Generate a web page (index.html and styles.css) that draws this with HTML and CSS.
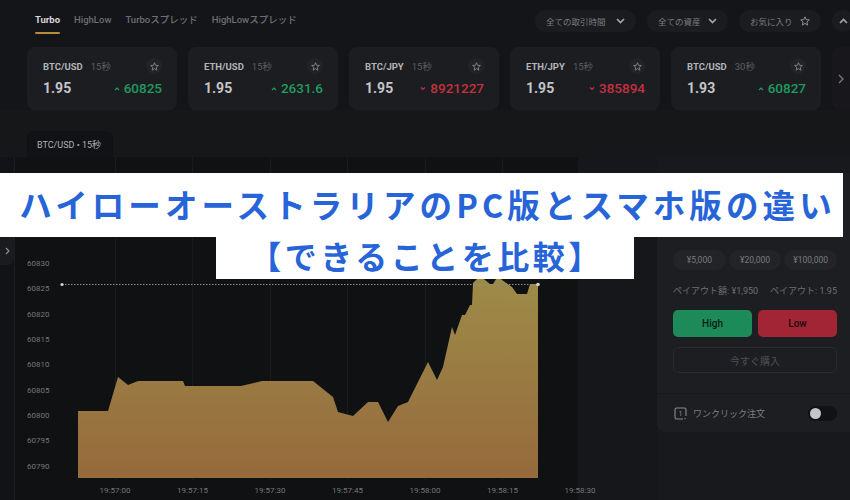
FILE: index.html
```html
<!DOCTYPE html>
<html lang="ja">
<head>
<meta charset="utf-8">
<title>Turbo</title>
<link rel="stylesheet" href="styles.css">
</head>
<body>
<div class="app">
  <header class="topbar">
    <nav class="tabs">
      <span class="tab active">Turbo</span>
      <span class="tab">HighLow</span>
      <span class="tab">Turboスプレッド</span>
      <span class="tab">HighLowスプレッド</span>
    </nav>
    <div class="filters">
      <button class="pill pill-time">全ての取引時間<svg width="9" height="6" viewBox="0 0 9 6"><polyline points="1,1 4.5,4.5 8,1" fill="none" stroke="#a3a4a8" stroke-width="1.7"/></svg></button>
      <button class="pill pill-asset">全ての資産<svg width="9" height="6" viewBox="0 0 9 6"><polyline points="1,1 4.5,4.5 8,1" fill="none" stroke="#a3a4a8" stroke-width="1.7"/></svg></button>
      <button class="pill pill-fav">お気に入り<svg width="10" height="10" viewBox="0 0 10 10"><polygon points="5,0.8 6.2,3.7 9.3,3.9 6.9,5.9 7.7,9.1 5,7.4 2.3,9.1 3.1,5.9 0.7,3.9 3.8,3.7" fill="none" stroke="#8e8f93" stroke-width="1"/></svg></button>
      <button class="circle-btn"><svg width="9" height="6" viewBox="0 0 9 6"><polyline points="1,5 4.5,1.5 8,5" fill="none" stroke="#a3a4a8" stroke-width="1.7"/></svg></button>
    </div>
  </header>

  <section class="cards">
    <div class="card">
      <div class="card-head"><span class="pair">BTC/USD</span><span class="dur">15秒</span><span class="fav"><svg width="9" height="9" viewBox="0 0 10 10"><polygon points="5,0.8 6.2,3.7 9.3,3.9 6.9,5.9 7.7,9.1 5,7.4 2.3,9.1 3.1,5.9 0.7,3.9 3.8,3.7" fill="none" stroke="#85868a" stroke-width="1"/></svg></span></div>
      <div class="card-body"><span class="payout">1.95</span><span class="rate up"><svg width="6" height="5" viewBox="0 0 6 5"><polyline points="1,4 3,2 5,4" fill="none" stroke="currentColor" stroke-width="1.2"/></svg>60825</span></div>
    </div>
    <div class="card">
      <div class="card-head"><span class="pair">ETH/USD</span><span class="dur">15秒</span><span class="fav"><svg width="9" height="9" viewBox="0 0 10 10"><polygon points="5,0.8 6.2,3.7 9.3,3.9 6.9,5.9 7.7,9.1 5,7.4 2.3,9.1 3.1,5.9 0.7,3.9 3.8,3.7" fill="none" stroke="#85868a" stroke-width="1"/></svg></span></div>
      <div class="card-body"><span class="payout">1.95</span><span class="rate up"><svg width="6" height="5" viewBox="0 0 6 5"><polyline points="1,4 3,2 5,4" fill="none" stroke="currentColor" stroke-width="1.2"/></svg>2631.6</span></div>
    </div>
    <div class="card">
      <div class="card-head"><span class="pair">BTC/JPY</span><span class="dur">15秒</span><span class="fav"><svg width="9" height="9" viewBox="0 0 10 10"><polygon points="5,0.8 6.2,3.7 9.3,3.9 6.9,5.9 7.7,9.1 5,7.4 2.3,9.1 3.1,5.9 0.7,3.9 3.8,3.7" fill="none" stroke="#85868a" stroke-width="1"/></svg></span></div>
      <div class="card-body"><span class="payout">1.95</span><span class="rate down"><svg width="6" height="5" viewBox="0 0 6 5"><polyline points="1,1.5 3,3.5 5,1.5" fill="none" stroke="currentColor" stroke-width="1.2"/></svg>8921227</span></div>
    </div>
    <div class="card">
      <div class="card-head"><span class="pair">ETH/JPY</span><span class="dur">15秒</span><span class="fav"><svg width="9" height="9" viewBox="0 0 10 10"><polygon points="5,0.8 6.2,3.7 9.3,3.9 6.9,5.9 7.7,9.1 5,7.4 2.3,9.1 3.1,5.9 0.7,3.9 3.8,3.7" fill="none" stroke="#85868a" stroke-width="1"/></svg></span></div>
      <div class="card-body"><span class="payout">1.95</span><span class="rate down"><svg width="6" height="5" viewBox="0 0 6 5"><polyline points="1,1.5 3,3.5 5,1.5" fill="none" stroke="currentColor" stroke-width="1.2"/></svg>385894</span></div>
    </div>
    <div class="card">
      <div class="card-head"><span class="pair">BTC/USD</span><span class="dur">30秒</span><span class="fav"><svg width="9" height="9" viewBox="0 0 10 10"><polygon points="5,0.8 6.2,3.7 9.3,3.9 6.9,5.9 7.7,9.1 5,7.4 2.3,9.1 3.1,5.9 0.7,3.9 3.8,3.7" fill="none" stroke="#85868a" stroke-width="1"/></svg></span></div>
      <div class="card-body"><span class="payout">1.93</span><span class="rate up"><svg width="6" height="5" viewBox="0 0 6 5"><polyline points="1,4 3,2 5,4" fill="none" stroke="currentColor" stroke-width="1.2"/></svg>60827</span></div>
    </div>
    <div class="card ghost"></div>
    <div class="cards-next"><svg width="6" height="10" viewBox="0 0 6 10"><polyline points="1,1 5,5 1,9" fill="none" stroke="#7a7b7f" stroke-width="1.3"/></svg></div>
  </section>

  <div class="tabrow">
    <div class="charttab">BTC/USD • 15秒</div>
  </div>

  <main class="main">
    <aside class="rail">
      <div class="rail-btn"><svg width="5" height="8" viewBox="0 0 5 8"><polyline points="1,1 4,4 1,7" fill="none" stroke="#8a8b8f" stroke-width="1.2"/></svg></div>
    </aside>
    <div class="chart">
      <svg class="chart-svg" width="642" height="343" viewBox="15 157 642 343">
        <defs>
          <linearGradient id="area" gradientUnits="userSpaceOnUse" x1="0" y1="278" x2="0" y2="478">
            <stop offset="0" stop-color="#9d8b48"/>
            <stop offset="1" stop-color="#966a3c"/>
          </linearGradient>
        </defs>
        <rect x="578" y="157" width="79" height="343" fill="#16171a"/>
        <g stroke="#1a1b1f" stroke-width="1">
          <line x1="115.5" y1="157" x2="115.5" y2="480"/>
          <line x1="192.5" y1="157" x2="192.5" y2="480"/>
          <line x1="270.5" y1="157" x2="270.5" y2="480"/>
          <line x1="347.5" y1="157" x2="347.5" y2="480"/>
          <line x1="425.5" y1="157" x2="425.5" y2="480"/>
          <line x1="502.5" y1="157" x2="502.5" y2="480"/>
        </g>
        <polygon fill="url(#area)" points="78,478 78,411 108,411 118,377 128,385 138,381 183,381 185,386 241,386 262,381 313,381 333,397 338,412 353,416 368,402 378,402 388,422 398,406 408,402 428,362 437,380 443,367 452,327 455,335 462,315 465,315 470,305 472,305 473,283 480,276 490,284 493,284 498,276 502,280 512,287 517,294 527,294 530,284 538,284 538,478"/>
        <line x1="62" y1="284.5" x2="538" y2="284.5" stroke="#8d8e92" stroke-width="1" stroke-dasharray="1.5 1.5"/>
        <circle cx="62" cy="284.5" r="1.6" fill="#d2d3d6"/>
        <circle cx="538" cy="284.5" r="1.8" fill="#d2d3d6"/>
        <g class="axis">
          <text x="27" y="266">60830</text>
          <text x="27" y="291">60825</text>
          <text x="27" y="317">60820</text>
          <text x="27" y="342">60815</text>
          <text x="27" y="367">60810</text>
          <text x="27" y="393">60805</text>
          <text x="27" y="418">60800</text>
          <text x="27" y="443">60795</text>
          <text x="27" y="469">60790</text>
        </g>
        <g class="axis axis-x">
          <text x="115" y="493">19:57:00</text>
          <text x="192.5" y="493">19:57:15</text>
          <text x="270" y="493">19:57:30</text>
          <text x="347.5" y="493">19:57:45</text>
          <text x="425" y="493">19:58:00</text>
          <text x="502.5" y="493">19:58:15</text>
          <text x="580" y="493">19:58:30</text>
        </g>
      </svg>
    </div>
    <aside class="side">
      <div class="panel">
        <div class="panel-main">
          <div class="amount-label"></div>
          <div class="amount-box"></div>
          <div class="presets">
            <span class="preset">¥5,000</span>
            <span class="preset">¥20,000</span>
            <span class="preset">¥100,000</span>
          </div>
          <div class="payout-row"><span>ペイアウト額: ¥1,950</span><span>ペイアウト: 1.95</span></div>
          <div class="trade">
            <button class="trade-btn high">High</button>
            <button class="trade-btn low">Low</button>
          </div>
          <button class="buy-now">今すぐ購入</button>
        </div>
        <div class="oneclick">
          <svg class="oc-icon" width="13" height="13" viewBox="0 0 13 13"><path d="M9 12H2.5A1.5 1.5 0 0 1 1 10.5v-8A1.5 1.5 0 0 1 2.5 1h8A1.5 1.5 0 0 1 12 2.5V9" fill="none" stroke="#8a8b8f" stroke-width="1.1"/><path d="M11 11l0 1.2" stroke="#8a8b8f" stroke-width="1.1"/><text x="6.5" y="9.3" text-anchor="middle" class="oc-num">1</text></svg>
          <span class="oc-label">ワンクリック注文</span>
          <span class="toggle"><span class="knob"></span></span>
        </div>
      </div>
    </aside>
  </main>
</div>

<div class="banner">
  <div class="b1">ハイローオーストラリアのPC版とスマホ版の違い</div>
  <div class="b2">【できることを比較】</div>
</div>
</body>
</html>
```

FILE: styles.css
```css
* { box-sizing: border-box; margin: 0; padding: 0; }
html, body { width: 850px; height: 500px; overflow: hidden; background: #141518; }
body {
  font-family: Roboto, "Noto Sans CJK JP", sans-serif;
  color: #c8c9cd;
  position: relative;
}
button { font: inherit; border: 0; background: none; color: inherit; cursor: pointer; }

/* top bar */
.topbar {
  height: 40px;
  display: flex;
  justify-content: space-between;
  padding-left: 35px;
  overflow: hidden;
}
.tabs { display: flex; gap: 14px; }
.tab {
  position: relative;
  height: 40px;
  display: flex;
  align-items: center;
  padding-bottom: 2px;
  font-size: 9.5px;
  font-weight: 500;
  color: #6d6e72;
  white-space: nowrap;
}
.tab.active { color: #d6d7da; font-weight: 700; }
.tab.active::after {
  content: "";
  position: absolute;
  left: 0; right: 0; top: 32px;
  height: 2px;
  border-radius: 1px;
  background: #b98a3c;
}
.filters {
  display: flex;
  align-items: center;
  gap: 11px;
  padding-top: 2px;
  margin-right: -4px;
}
.pill {
  height: 22px;
  border-radius: 11px;
  background: #1b1c20;
  display: flex;
  align-items: center;
  justify-content: space-between;
  padding: 0 11px;
  font-size: 8.5px;
  color: #7a7b7f;
  flex: none;
  white-space: nowrap;
}
.pill-time { width: 101px; }
.pill-asset { width: 81px; }
.pill-fav { width: 82px; }
.circle-btn {
  width: 22px; height: 22px;
  border-radius: 50%;
  background: #1b1c20;
  display: grid;
  place-items: center;
  flex: none;
}

/* cards */
.cards {
  position: relative;
  display: flex;
  gap: 11px;
  height: 70px;
  padding: 7px 0 0 27px;
  overflow: hidden;
}
.card {
  flex: none;
  width: 150px;
  height: 63px;
  border-radius: 8px;
  background: #1c1d21;
  padding: 11px 15px 0 16px;
}
.card.ghost { opacity: .45; }
.card-head { display: flex; align-items: center; height: 16px; }
.pair { font-size: 9.5px; font-weight: 700; color: #b3b4b8; }
.dur { font-size: 9.5px; color: #5d5e62; margin-left: 8px; }
.fav {
  margin-left: auto;
  width: 16px; height: 16px;
  border-radius: 50%;
  background: #222327;
  display: grid;
  place-items: center;
}
.card-body {
  display: flex;
  align-items: center;
  justify-content: space-between;
  height: 16px;
  margin-top: 6px;
}
.payout { font-size: 14px; font-weight: 700; color: #c4c5c9; }
.rate { display: flex; align-items: center; gap: 4px; font-size: 13.5px; font-weight: 500; }
.up { color: #1f9b5f; }
.down { color: #c4303f; }
.cards-next {
  position: absolute;
  right: 0; top: 7px;
  width: 18px; height: 63px;
  display: grid;
  place-items: center;
}

/* chart tab row */
.tabrow {
  height: 47px;
  background: #161719;
  padding-left: 27px;
  display: flex;
  align-items: flex-end;
}
.charttab {
  width: 86px;
  height: 26px;
  background: #111215;
  border-radius: 8px 8px 0 0;
  padding-left: 10px;
  display: flex;
  align-items: center;
  font-size: 9px;
  color: #b0b1b5;
  white-space: nowrap;
}

/* main */
.main { display: flex; height: 343px; background: #101113; }
.rail {
  width: 15px;
  flex: none;
  background: #121316;
  border-right: 1px solid #1c1d21;
  padding-top: 68px;
}
.rail-btn {
  height: 40px;
  background: #1a1b1f;
  border-radius: 0 0 6px 0;
  display: flex;
  align-items: flex-end;
  justify-content: center;
  padding-bottom: 10px;
}
.chart { width: 642px; flex: none; }
.chart-svg { display: block; }
.axis text { font-family: Roboto, sans-serif; font-size: 8px; fill: #75767a; }
.axis-x text { text-anchor: middle; }

.side { width: 193px; flex: none; background: #18191c; padding-top: 16px; }
.panel { background: #1d1e22; border-radius: 0 0 0 8px; }
.panel-main { padding: 14px 13px 20px 16px; border-bottom: 1px solid #18191c; }
.amount-label { height: 12px; }
.amount-box {
  margin-top: 4px;
  height: 30px;
  border-radius: 6px;
  background: #25262a;
}
.presets { margin-top: 17px; display: flex; gap: 3px; }
.preset {
  flex: 1;
  height: 20px;
  border-radius: 10px;
  background: #232428;
  font-size: 8.5px;
  color: #7a7b7f;
  display: flex;
  align-items: center;
  justify-content: center;
}
.payout-row {
  margin-top: 14px;
  height: 12px;
  display: flex;
  justify-content: space-between;
  align-items: center;
  font-size: 9px;
  color: #6d6e72;
  white-space: nowrap;
}
.trade { margin-top: 14px; display: flex; gap: 6px; }
.trade-btn {
  flex: 1;
  height: 27px;
  border-radius: 5px;
  font-size: 10px;
  font-weight: 500;
}
.high { background: #1d8a5a; color: #0b1a12; }
.low { background: #a22535; color: #1e0a0d; }
.buy-now {
  display: flex;
  width: 100%;
  margin-top: 10px;
  height: 26px;
  border: 1px solid #2a2b2f;
  border-radius: 5px;
  align-items: center;
  justify-content: center;
  font-size: 10px;
  color: #4f5054;
}
.oneclick {
  height: 38px;
  display: flex;
  align-items: center;
  padding: 0 13px 0 17px;
}
.oc-num { font-family: Roboto, sans-serif; font-size: 7px; fill: #8a8b8f; }
.oc-label { margin-left: 6px; font-size: 9px; color: #7d7e82; }
.toggle {
  margin-left: auto;
  width: 29px; height: 15px;
  border-radius: 8px;
  background: #111215;
  display: flex;
  align-items: center;
  padding-left: 2px;
}
.knob { width: 11px; height: 11px; border-radius: 50%; background: #c4c5c8; }

/* banner overlay */
.banner {
  position: absolute;
  top: 173px;
  left: 0;
  width: 850px;
  display: flex;
  flex-direction: column;
  align-items: center;
  font-family: "Noto Sans CJK JP", sans-serif;
  font-weight: 700;
  color: #2764d8;
}
.b1 {
  align-self: flex-start;
  width: 843px;
  height: 64px;
  background: #fff;
  padding-left: 12px;
  text-align: center;
  font-size: 32.5px;
  line-height: 62px;
  letter-spacing: 4.1px;
  white-space: nowrap;
}
.b2 {
  width: 418px;
  height: 42px;
  background: #fff;
  text-align: center;
  padding-left: 3px;
  font-size: 32px;
  line-height: 36px;
  letter-spacing: 3.5px;
  white-space: nowrap;
}
```
